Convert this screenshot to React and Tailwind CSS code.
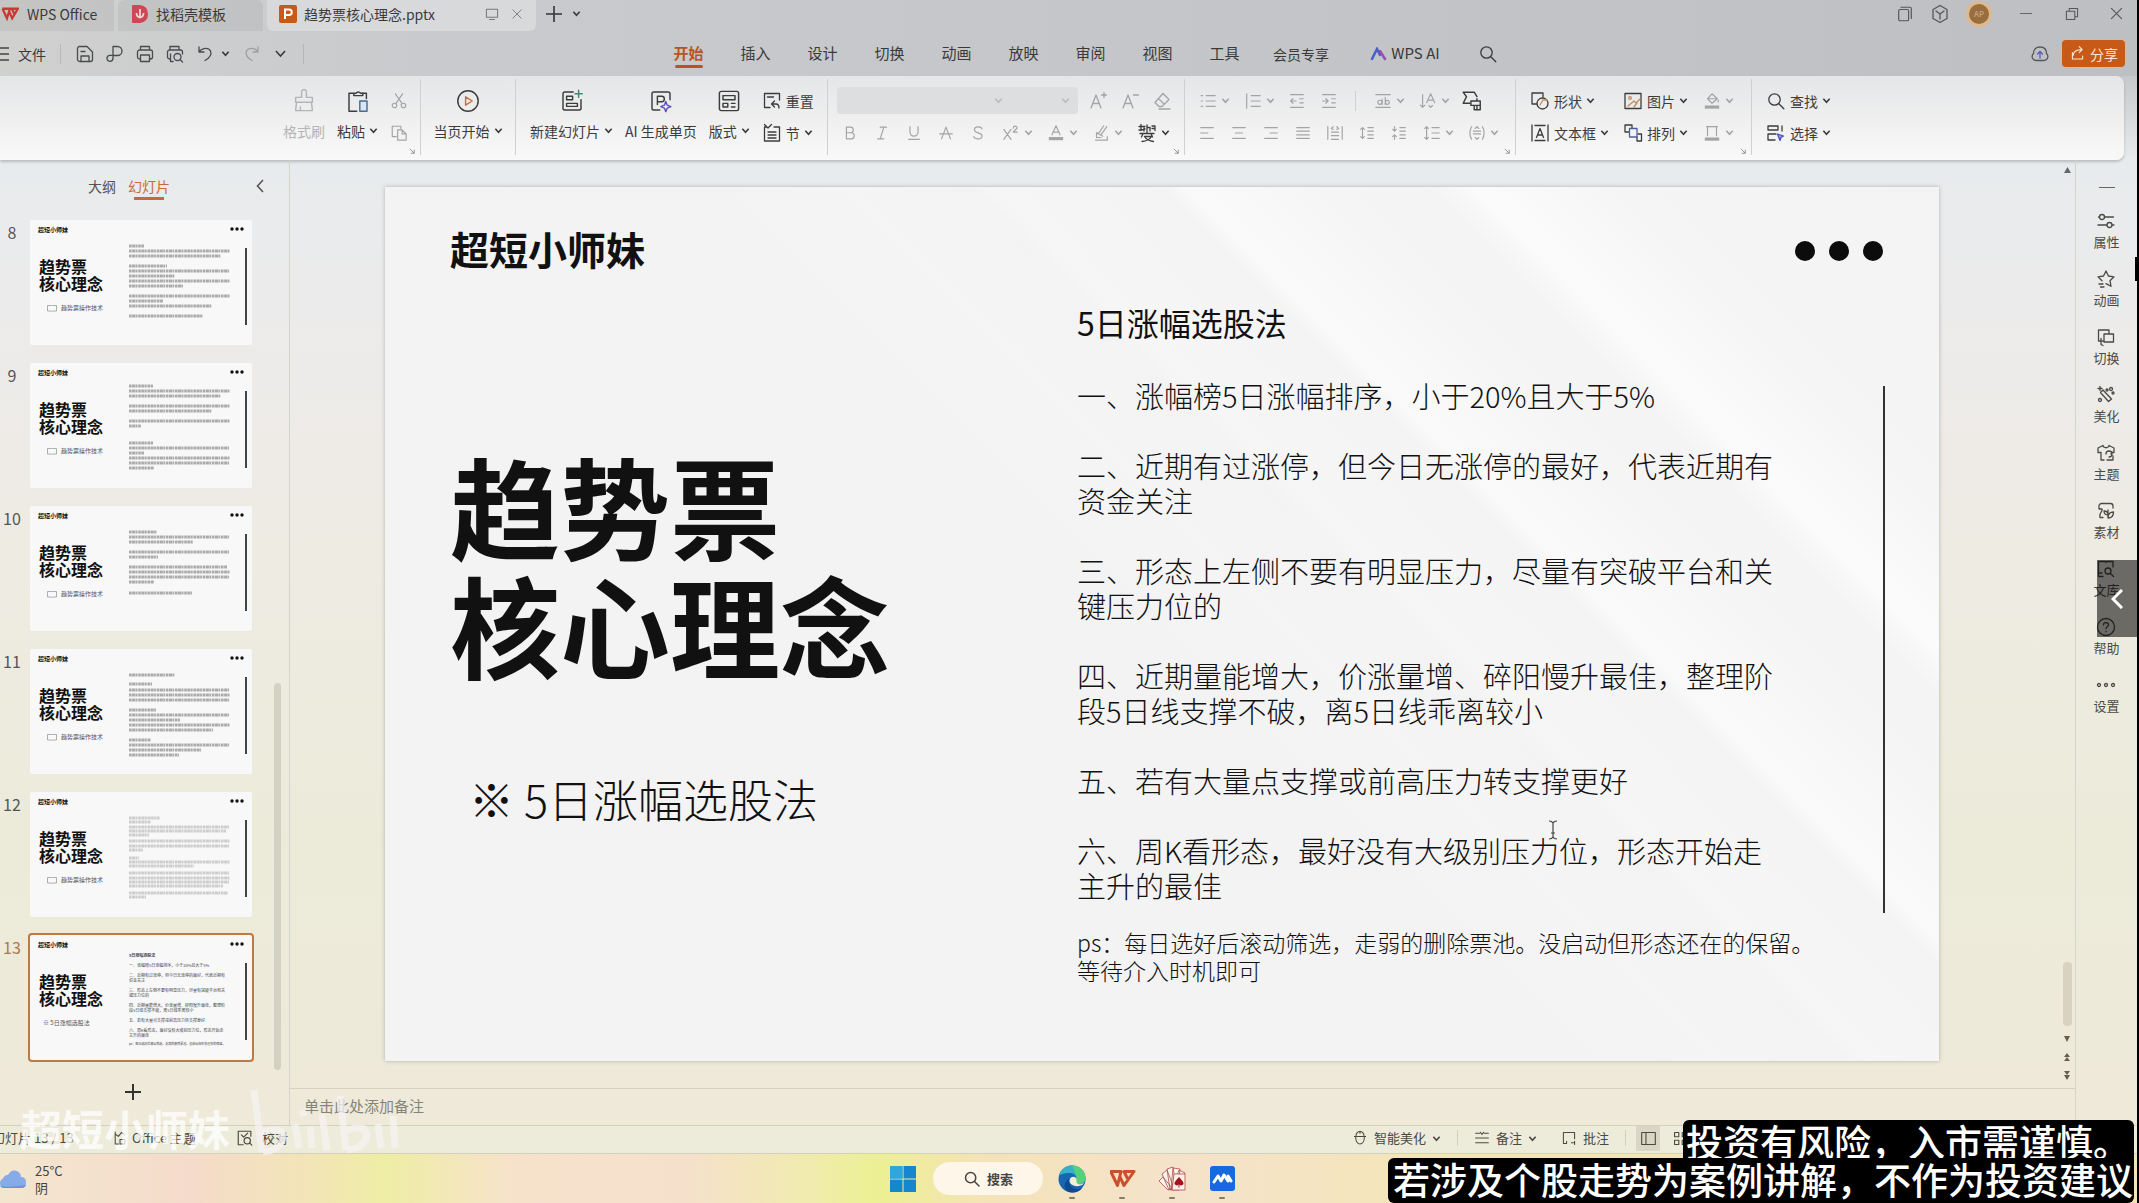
import { useState } from "react";
import clsx from "clsx";

const menus = ['开始', '插入', '设计', '切换', '动画', '放映', '审阅', '视图', '工具'];

const slideLines = [
  '一、涨幅榜5日涨幅排序，小于20%且大于5%',
  '',
  '二、近期有过涨停，但今日无涨停的最好，代表近期有',
  '资金关注',
  '',
  '三、形态上左侧不要有明显压力，尽量有突破平台和关',
  '键压力位的',
  '',
  '四、近期量能增大，价涨量增、碎阳慢升最佳，整理阶',
  '段5日线支撑不破，离5日线乖离较小',
  '',
  '五、若有大量点支撑或前高压力转支撑更好',
  '',
  '六、周K看形态，最好没有大级别压力位，形态开始走',
  '主升的最佳',
];

// [y, width] of every body line in the small previews
const thumbs = [
  { no: 8, rows: [[26, 15], [31, 101], [36, 92], [46, 38], [51, 100], [56, 46], [61, 101], [66, 54], [76, 101], [81, 34], [86, 83], [96, 74]] },
  { no: 9, rows: [[23, 24], [28, 101], [33, 92], [43, 101], [48, 83], [58, 101], [63, 12], [80, 24], [85, 100], [90, 15], [95, 101], [100, 100], [105, 25]] },
  { no: 10, rows: [[26, 28], [31, 100], [36, 64], [46, 100], [51, 29], [61, 98], [66, 101], [71, 100], [76, 25], [87, 63]] },
  { no: 11, rows: [[26, 46], [35, 23], [41, 100], [46, 101], [51, 100], [61, 27], [66, 100], [71, 51], [76, 101], [81, 84], [91, 22], [96, 100], [101, 72], [106, 50]] },
  { no: 12, pale: true, rows: [[26, 31], [30, 22], [35, 100], [39, 97], [43, 20], [49, 101], [54, 100], [58, 14], [66, 10], [70, 101], [74, 65], [81, 100], [86, 101], [90, 100], [94, 94], [101, 99], [105, 17]] },
  { no: 13 },
];

function Icon({ size = 20, className, children, sw = 1.3 }) {
  return (
    <svg width={size} height={size} viewBox="0 0 20 20" fill="none" stroke="currentColor" strokeWidth={sw} strokeLinecap="round" strokeLinejoin="round" className={clsx('shrink-0', className)}>
      {children}
    </svg>
  );
}

const P = ({ d, ...rest }) => <path d={d} {...rest} />;

const icons = {
  save: <><P d="M2.5 4.500a2 2 0 0 1 2-2H12l5.500 5.500v7.500a2 2 0 0 1-2 2h-11a2 2 0 0 1-2-2z" /><P d="M6 17.500V12h8v5.500M6 7.500h4" /></>,
  export: <P d="M8 2.500h4.500a4.500 4.500 0 0 1 0 9H8zM8 11.500v2.800a3 3 0 1 1-3-3h3" />,
  print: <><P d="M5.500 6V2.500h9V6M5.500 15h-1a2 2 0 0 1-2-2V8a2 2 0 0 1 2-2h11a2 2 0 0 1 2 2v5a2 2 0 0 1-2 2h-1" /><P d="M5.500 11h9v6.500h-9z" /></>,
  preview: <><P d="M5 6V2.500h9V6M5 15h-.5a2 2 0 0 1-2-2V8a2 2 0 0 1 2-2h11a2 2 0 0 1 2 2v2M5.500 10v7.500H8" /><circle cx="12.500" cy="13" r="3.500" /><P d="m15 15.500 2.500 2.500" /></>,
  proof: <><P d="M8 17.500H2.500v-15h14V8M6 6.500l2.500 2.500L13 4.500" /><circle cx="12.500" cy="13" r="3.500" /><P d="m15 15.500 2.500 2.500" /></>,
  undo: <P d="M4 3v5h5M4 8c3-4.500 9.500-5 11.500-1 1.500 4-2 7.500-5.500 9.500" />,
  redo: <P d="M16 3v5h-5M16 8c-3-4.500-9.500-5-11.500-1-1.500 4 2 7.500 5.500 9.500" />,
  search: <><circle cx="8.500" cy="8.500" r="5.700" /><P d="m12.800 12.800 5 5" /></>,
  brush: <P d="M8 7V2.500a2 2 0 0 1 4 0V7h5v4H3V7zM3.800 11 3 18h14l-.8-7M7 18v-3" />,
  paste: <><P d="M6 3.500H2.500v15H9M14 3.500h3V8" /><P d="M6.500 5.500v-2h2a2 2 0 0 1 3.500 0h2v2z" /><P d="M11.500 10h6v8.500h-6z" stroke="#4a6a94" fill="#dbe6f3" /></>,
  cut: <><circle cx="5" cy="15" r="2.500" /><circle cx="15" cy="15" r="2.500" /><P d="M6.500 13 14 2M13.500 13 6 2" /></>,
  copy: <P d="M12 5V2.500H2.500V14H7M8.500 6.500h5L18 11v7H8.500zM13.500 6.500V11H18" />,
  play: <><circle cx="10" cy="10" r="8.500" /><P d="M8 6.500 13.500 10 8 13.500z" stroke="#c4713f" /></>,
  newSlide: <><P d="M11 2.500H4a1.500 1.500 0 0 0-1.500 1.500v12A1.500 1.500 0 0 0 4 17.500h12a1.500 1.500 0 0 0 1.500-1.500V9" /><P d="M5.500 6h5v3h-5zM5.500 12h9v2.500h-9z" /><P d="M15.500 1v6M12.500 4h6" stroke="#3c8a6a" /></>,
  aiPage: <><P d="M9 17.500H4A1.500 1.500 0 0 1 2.500 16V4A1.500 1.500 0 0 1 4 2.500h12A1.500 1.500 0 0 1 17.500 4v5M7 13V6h3.500a2.300 2.300 0 0 1 0 4.600H7" /><P d="m14 10.500 1.200 3 3 1.200-3 1.200-1.200 3-1.200-3-3-1.200 3-1.200z" stroke="#5b4fc4" /></>,
  layout: <><rect x="2" y="2" width="16" height="16" rx="1.500" /><P d="M5 5.500h10V9H5zM5 12h4v3H5zM12 12h3M12 15h3" /></>,
  reset: <><P d="M8 16.500H2.500v-14h15V9M5.500 6h6" /><P d="m12.500 10-3 3 3 3M9.500 13H14c2 0 3 1.500 3 4" /></>,
  section: <P d="M5 4H2.500v14h15V4H15M2.500 1.500 6 5l3.500-3.500M12 4h3M6 9h8M6 12h8M6 15h8" />,
  fontUp: <P d="m3 17 5-13 5 13M5 12.500h6M13.500 4h5M16 1.500v5" />,
  fontDown: <P d="m3 17 5-13 5 13M5 12.500h6M13.500 4h5" />,
  eraser: <P d="m11 2.500 6 6-7 7H7L3 11.500zM6.500 7.500l5.500 5.500M7 18h11" />,
  bold: <P d="M6 3.500h4.500a3 3 0 0 1 0 6.200H6zM6 9.700h5.300a3.300 3.300 0 0 1 0 6.800H6z" />,
  italic: <P d="M8 3.500h7M5 16.500h7M12 3.500l-4 13" />,
  underline: <P d="M5.500 3v6a4.500 4.500 0 0 0 9 0V3M4 17h12" />,
  strike: <P d="m5 16.500 5-13 5 13M3 11h14" />,
  shadow: <P d="M14.500 5.500C13.500 2 6 2.500 6 6.300c0 4.500 8.500 2.500 8.500 7 0 4-8 4.500-9.200.7" />,
  sup: <P d="m2 6 8 11M10 6 2 17M12.500 4.500c.3-3 4.500-2.500 4 0-.2 1.500-3 2.500-4 4.500h4.500" />,
  color: <><P d="M5.500 12 10 2l4.500 10M7 9h6" /><rect x="2" y="14.500" width="16" height="3.500" fill="currentColor" stroke="none" /></>,
  marker: <P d="M13 2 7 11M16.500 3 10 12M5 9.500l7 4M5 10v5h5M4 18h13v-4" />,
  pinyin: <><P d="M2 3.500h6M4 1.500v6M2 7l6-1M7 5v3M10 2v5.500M10 4.500h3V8M15 3h3v4.500M15 5.500h3" /><P d="M3 10.500h14M10 8.500v2M6 10.500 4.500 14M14 10.500l1.500 3.500M5 18.500c5-.5 8-2.500 9.500-5H7.500c1.500 2.500 5 4.500 9 5" /></>,
  bullets: <P d="M8 4h10M8 10h10M8 16h10M2.500 4h1.500M2.500 10h1.500M2.500 16h1.500" />,
  numbers: <P d="M8 4h10M8 10h10M8 16h10M3 2v16" />,
  outdent: <P d="M3 3h14M3 17h14M13 7.500h4M13 12h4M9 10H3m2.500-2.500L3 10l2.500 2.500" />,
  indent: <P d="M3 3h14M3 17h14M13 7.500h4M13 12h4M3 10h6M6.500 7.500 9 10l-2.500 2.500" />,
  abBox: <><P d="M2 3h16M2 17h16M9 8v6M17 11.500a2.200 2.200 0 1 1-4.400 0 2.200 2.200 0 0 1 4.400 0M12.500 6v8" /><circle cx="6.500" cy="11.500" r="2.300" /></>,
  textDir: <P d="M4 3v14M1.500 14.500 4 17l2.500-2.500M8.500 12 13 2l4.500 10M10 9h6M11 15l2 2 2-2" />,
  convert: <><P d="M2 2h10l2.500 4M2 2l3 4-3 6h6" /><P d="M9 14v-4h8.500v8H12v-4zM14.500 8v2M12 14h5.500M14.500 14v4" /></>,
  left: <P d="M3 4h14M3 10h8M3 16h14" />,
  center: <P d="M3 4h14M6 10h8M3 16h14" />,
  right: <P d="M3 4h14M9 10h8M3 16h14" />,
  justify: <P d="M3 4h14M3 8h14M3 12h14M3 16h14" />,
  distribute: <P d="M2 3v14M18 3v14M6 9h8M6 13h8M6 17h8M8 3 6 5l2 1M12 3l2 2-2 1" />,
  spaceUp: <P d="M5 4v12M3 6l2-2 2 2M3 14l2 2 2-2M11 4h6M11 8h6M11 12h6M11 16h6" />,
  spaceDown: <P d="M5 3v5M3 6l2 2 2-2M5 17v-5M3 14l2-2 2 2M11 4h6M11 8h6M11 12h6M11 16h6" />,
  lineHeight: <P d="M4 3v14M2 5l2-2 2 2M2 15l2 2 2-2M10 4h8M10 10h8M10 16h8" />,
  vAlign: <P d="M4 3c-2.500 4-2.500 10 0 14M16 3c2.500 4 2.500 10 0 14M6 8h8M6 11h8M8 5l2-2 2 2M8 15l2 2 2-2" />,
  shape: <><P d="M7 13H2V2h11v4" /><circle cx="12.500" cy="12.500" r="5.500" /><P d="m10 14 3-5h4" stroke="#c9925a" /></>,
  picture: <><rect x="2" y="2.500" width="16" height="15" /><P d="m5 15 6-5 2 2 4-4M11 16l3-4" stroke="#c48a5b" /><circle cx="7" cy="7" r="1.300" stroke="#c48a5b" /></>,
  fill: <><P d="m10 2 6 5.500-6 5-5-5zM5 7.500h10M17 9v2" /><rect x="2" y="15" width="16" height="3.500" fill="currentColor" stroke="none" /></>,
  outline: <><P d="M5 13V3h10v10M4 3h3M13 3h3" /><rect x="2" y="15" width="16" height="3.500" fill="currentColor" stroke="none" /></>,
  textBox: <P d="M2 2v16M18 2v16M5 2.500h10M5 17.500h10M6.500 14.500 10 5.500l3.500 9M7.500 12h5" />,
  arrange: <><P d="M6 9H2V2h7v3M14 14v4h4.500v-7H15" /><P d="M6.500 5.500H14V14H6.500z" stroke="#4d5fa8" /></>,
  select: <><P d="M2 3h10v4H2zM9 17H2v-6h8M16 3v5" /><P d="m11.500 11 6 2-2.500 1.500-1 3z" stroke="#4b50c0" fill="#9da0e6" /></>,
  windows: <><rect x="3" y="5" width="11" height="12.500" rx="1.500" /><P d="M5.500 2.500h10a1.500 1.500 0 0 1 1.500 1.500v11" /></>,
  cube: <P d="m10 1.500 7 4v9l-7 4-7-4v-9zM6 7l4 3 4-3M10 10v5" />,
  restore: <P d="M3 6.500h10.500V17H3zM6.500 6.500V3H17v10.500h-3.500" />,
  close: <P d="m4 4 12 12M16 4 4 16" />,
  cloudUp: <><P d="M6 16.500a4 4 0 0 1-2.500-7C3.500 5 6.500 3 10 3s6.500 2 6.500 6.500a4 4 0 0 1-2.500 7z" /><P d="M10 14V8M7.500 10 10 7.500l2.500 2.500" stroke="#5a58b8" /></>,
  share: <P d="M4 9v7.500h12V13M5 12c.5-5 4-6.500 10-6.500M12 2l3.500 3.500L12 9" />,
  props: <><circle cx="6" cy="6" r="2.500" /><P d="M8.500 6h9M2.500 6h1M2 14h9M16 14h2" /><circle cx="13.500" cy="14" r="2.500" /></>,
  star: <P d="m10 2 2.400 5 5.600.8-4 3.900 1 5.600-5-2.700M10 2 7.500 7 2 7.800l4 3.900M3 15h4M4.500 18H8" />,
  swap: <P d="M8 14H2.500V3H13v4M8 7h9.500v8H8zM5 11.500v6l2 1" />,
  beautify: <><P d="m12.500 16.500-8-9 2.500-2.500 8.500 9zM4 1.500v4M2 3.500h4" /><circle cx="15" cy="4" r="1.500" /><circle cx="11" cy="5" r="1" /><circle cx="4" cy="15" r="1.500" /><circle cx="17" cy="8" r="1" /></>,
  theme: <P d="M7 2.500 2 5v4.500h3V17h3M13 2.500 18 5v4.500h-2M7 2.500c.5 3 5.500 3 6 0M11 17h6v-4M10 11a3 3 0 1 1 3 3M15 11l1-2" />,
  material: <P d="M3 8V5a2.500 2.500 0 0 1 2.500-2.500h9A2.500 2.500 0 0 1 17 5v2M3 8h3c1 3-3 3-2 8.500h3M12 17V9M12 14c-3 0-4-2-4-4 3 0 4 2 4 4zM12 17c4 0 5.500-3 5.500-6-4 0-5.500 3-5.500 6z" />,
  library: <><P d="M7 17.500H2.500v-15H9c1 0 1 1 1 1s0-1 1-1h6V8M2.500 14H6" /><circle cx="12" cy="12" r="3" /><P d="m14.500 14.500 3 3" /></>,
  help: <><circle cx="10" cy="10" r="8.500" /><P d="M7.500 8c0-3.500 5-3 5-.3 0 2-2.500 2-2.500 4M10 14.500v.2" /></>,
  more: <><circle cx="3" cy="10" r="1.500" /><circle cx="10" cy="10" r="1.500" /><circle cx="17" cy="10" r="1.500" /></>,
  hat: <P d="M3 8h14M5 8c-1-8 11-8 10 0M4.500 8.500c0 12 11 12 11 0M10 2v2" />,
  notes: <P d="M2 10h16M2 16h16M2 4h5M13 4h5M8 3l2 2.500L12 3" />,
  comment: <P d="M7 17H3V3h14v8M7 17v-3M13 16h4M17 14v4" />,
  normal: <><rect x="2" y="3" width="16" height="14" /><P d="M7 3v14" /></>,
  sorter: <P d="M3 3h5v5H3zM12 3h5v5h-5zM3 12h5v5H3zM12 12h5v5h-5z" />,
  officeTheme: <P d="M4 2.500v15h4M4 5l4 3 4-5 4 3M10 12h6v5.500h-6z" />,
  screen: <P d="M3 4h14v10H3zM7 17h6" />,
};

function Ic({ name, size = 20, className, sw }) {
  return <Icon size={size} className={className} sw={sw}>{icons[name]}</Icon>;
}

function Chevron({ className, size = 9, sw = 1.8 }) {
  return (
    <svg width={size} height={size} viewBox="0 0 10 10" fill="none" stroke="currentColor" strokeWidth={sw} className={clsx('shrink-0', className)}>
      <path d="m1.500 3 3.500 4 3.500-4" />
    </svg>
  );
}

function Cell({ name, drop, pale = true, size = 18 }) {
  return (
    <button aria-label={name} className={clsx('flex h-8 items-center', drop ? 'w-[45px] gap-1 pl-2' : 'w-8 justify-center', pale ? 'text-[#a3a4a6]' : 'text-[#3c3c3c]')}>
      <Ic name={name} size={size} />
      {drop && <Chevron />}
    </button>
  );
}

function BigTool({ name, label, drop, pale, className }) {
  return (
    <button className={clsx('flex flex-col items-center gap-1 whitespace-nowrap', pale ? 'text-[#b4b5b7]' : 'text-[#3c3c3c]', className)}>
      <Ic name={name} size={24} sw={1.2} />
      <span className="flex items-center gap-1 text-sm leading-7">{label}{drop && <Chevron />}</span>
    </button>
  );
}

function SmallTool({ name, label, drop = true }) {
  return (
    <button className="flex h-8 items-center gap-1 text-sm whitespace-nowrap text-[#3c3c3c]">
      <Ic name={name} />
      {label}
      {drop && <Chevron />}
    </button>
  );
}

function Group({ className, corner, children }) {
  return (
    <div className={clsx('relative flex h-[76px] items-center border-r border-[#cfd0d2]', className)}>
      {children}
      {corner && (
        <svg width="7" height="7" viewBox="0 0 8 8" fill="none" stroke="#8a8a8a" className="absolute right-1 bottom-0">
          <path d="M1 1l5 5M6 2v4H2" />
        </svg>
      )}
    </div>
  );
}

function TitleBar() {
  return (
    <div className="flex h-[31px] items-center text-sm text-[#3a3a3a]">
      <button className="flex h-full w-[114px] items-center gap-2 bg-black/5 pb-1 pl-px whitespace-nowrap">
        <svg width="18" height="14" viewBox="0 0 20 16" fill="none" stroke="#c63c33" strokeWidth="2.600">
          <path d="M1 2h9l-3.500 11L1.500 2M9 5l3.500 8L19 2h-7l3 6" />
        </svg>
        WPS Office
      </button>
      <button className="ml-1 flex h-full w-[145px] items-center gap-2 rounded-t-md bg-black/5 pb-1 pl-3.5 whitespace-nowrap">
        <svg width="16" height="18" viewBox="0 0 16 18">
          <path d="M0 1q0-1 1-1h7q8 1 8 9t-8 9H1q-1 0-1-1z" fill="#cf4655" />
          <path d="M8 4v9M4.500 8q0 4 3.500 4.500Q11.500 12 11.500 8" stroke="#f3d3d6" strokeWidth="1.800" fill="none" />
        </svg>
        找稻壳模板
      </button>
      <div className="ml-1 flex h-full w-[269px] items-center rounded-b-md bg-[#d8d9da] pr-3 pb-1 pl-3 whitespace-nowrap">
        <svg width="18" height="18" viewBox="0 0 18 18" className="mr-[7px]">
          <rect width="18" height="18" rx="2" fill="#c75a17" />
          <path d="M6 14V4.500h4a2.800 2.800 0 0 1 0 5.600H6" stroke="#fff" strokeWidth="2" fill="none" />
        </svg>
        趋势票核心理念.pptx
        <Ic name="screen" size={16} className="ml-auto text-[#77787a]" />
        <button aria-label="关闭标签" className="ml-2.5 text-[#77787a]"><Ic name="close" size={14} /></button>
      </div>
      <div className="flex items-center gap-2.5 pb-1 pl-2.5">
        <button aria-label="新建"><svg width="16" height="16" viewBox="0 0 16 16" stroke="#333" strokeWidth="1.600"><path d="M8 0v16M0 8h16" /></svg></button>
        <button aria-label="标签列表"><Chevron /></button>
      </div>
      <div className="ml-auto flex items-center pr-3 pb-1 text-[#55565a]">
        <Ic name="windows" size={18} />
        <Ic name="cube" size={20} className="ml-4" />
        <div className="ml-4 flex size-[26px] items-center justify-center rounded-full bg-[#dfb98c]">
          <span className="flex size-5 items-center justify-center rounded-full bg-[#9a6d3e] text-[8px] text-[#d9b48a]">AP</span>
        </div>
        <button aria-label="最小化" className="ml-7 h-px w-3 bg-[#66676a]" />
        <button aria-label="还原" className="ml-8"><Ic name="restore" size={16} /></button>
        <button aria-label="关闭" className="ml-7"><Ic name="close" size={17} /></button>
      </div>
    </div>
  );
}

function MenuBar({ active, onSelect }) {
  return (
    <div className="flex h-[45px] items-center text-[15px] text-[#3a3a3a]">
      <div className="flex w-[655px] shrink-0 items-center">
        <svg width="10" height="14" viewBox="0 0 10 14" stroke="#444" strokeWidth="1.500"><path d="M0 1h9M0 7h9M0 13h9" /></svg>
        <button className="ml-2 text-sm">文件</button>
        <span className="mx-3.5 h-5 w-px bg-[#b4b6b9]" />
        <div className="flex items-center gap-2.5 text-[#4a4b4d]">
          <Ic name="save" />
          <Ic name="export" />
          <Ic name="print" />
          <Ic name="preview" />
          <Ic name="undo" />
        </div>
        <Chevron className="ml-1.5" />
        <Ic name="redo" className="ml-3 text-[#9d9fa2]" />
        <Chevron size={13} sw={1.2} className="ml-3" />
        <span className="ml-4 h-5 w-px bg-[#b4b6b9]" />
      </div>
      {menus.map((m) => (
        <button key={m} onClick={() => onSelect(m)} className={clsx('relative flex h-9 w-[67px] items-center justify-center', active === m && 'font-bold text-[#b9541f]')}>
          {m}
          {active === m && <span className="absolute bottom-1 h-[3px] w-7 rounded bg-[#b9541f]" />}
        </button>
      ))}
      <button className="w-[86px] text-center text-sm">会员专享</button>
      <button className="flex w-[122px] items-center justify-center gap-1 whitespace-nowrap">
        <svg width="17" height="14" viewBox="0 0 17 14" fill="none" strokeWidth="2.500" strokeLinecap="round">
          <path d="M2 12 7 2l3 6" stroke="#4660c8" />
          <path d="m10 4 5 8" stroke="#9a4bb8" />
        </svg>
        WPS AI
      </button>
      <button aria-label="搜索" className="flex w-11 justify-center"><Ic name="search" /></button>
      <div className="ml-auto flex items-center gap-3 pr-3">
        <Ic name="cloudUp" className="text-[#55565a]" />
        <button className="flex h-[27px] w-[63px] items-center justify-center gap-1 rounded bg-[#c75a17] text-sm text-[#fbe6d8]">
          <Ic name="share" size={17} />分享
        </button>
      </div>
    </div>
  );
}

function Ribbon() {
  return (
    <div className="mr-[13px] flex h-[84px] items-center rounded-r-lg bg-linear-to-b from-[#e4e6e8] via-[#efefef] to-[#f9f9f9] pb-[3px] shadow-[0_2px_3px_rgba(0,0,0,0.2)]">
      <Group corner className="ml-[283px] w-[138px] gap-3">
        <BigTool name="brush" label="格式刷" pale />
        <BigTool name="paste" label="粘贴" drop />
        <div className="flex flex-col text-[#a3a4a6]">
          <button aria-label="剪切" className="flex h-8 items-center"><Ic name="cut" size={18} /></button>
          <button aria-label="复制" className="flex h-8 items-center"><Ic name="copy" size={18} /></button>
        </div>
      </Group>
      <Group className="w-[95px] justify-center">
        <BigTool name="play" label="当页开始" drop />
      </Group>
      <Group className="w-[312px] gap-3 pl-3.5">
        <BigTool name="newSlide" label="新建幻灯片" drop />
        <BigTool name="aiPage" label="AI 生成单页" />
        <BigTool name="layout" label="版式" drop />
        <div className="flex flex-col">
          <SmallTool name="reset" label="重置" drop={false} />
          <SmallTool name="section" label="节" />
        </div>
      </Group>
      <Group corner className="w-[357px] pl-1.5">
        <div>
          <div className="flex h-8 items-center">
            <label className="relative ml-[3px] flex h-[27px] w-[174px] items-center rounded-l bg-[#dddedf]">
              <select disabled aria-label="字体" className="h-full w-full appearance-none bg-transparent" />
              <Chevron className="absolute right-2 text-[#b9babc]" />
            </label>
            <label className="relative flex h-[27px] w-[67px] items-center rounded-r bg-[#dddedf]">
              <select disabled aria-label="字号" className="h-full w-full appearance-none bg-transparent" />
              <Chevron className="absolute right-2 text-[#b9babc]" />
            </label>
            <span className="w-1" />
            <Cell name="fontUp" size={20} />
            <Cell name="fontDown" size={20} />
            <Cell name="eraser" size={20} />
          </div>
          <div className="flex h-8 items-center">
            {['bold', 'italic', 'underline', 'strike', 'shadow'].map((n) => <Cell key={n} name={n} />)}
            <Cell name="sup" drop />
            <Cell name="color" drop />
            <Cell name="marker" drop />
            <Cell name="pinyin" drop pale={false} size={20} />
          </div>
        </div>
      </Group>
      <Group corner className="w-[331px] pl-1.5">
        <div>
          <div className="flex h-8 items-center">
            <Cell name="bullets" drop />
            <Cell name="numbers" drop />
            <Cell name="outdent" />
            <Cell name="indent" />
            <span className="mx-2.5 h-5 w-px bg-[#cfd0d2]" />
            <Cell name="abBox" drop />
            <Cell name="textDir" drop />
            <Cell name="convert" pale={false} size={22} />
          </div>
          <div className="flex h-8 items-center">
            {['left', 'center', 'right', 'justify', 'distribute', 'spaceUp', 'spaceDown'].map((n) => <Cell key={n} name={n} />)}
            <Cell name="lineHeight" drop />
            <Cell name="vAlign" drop />
          </div>
        </div>
      </Group>
      <Group corner className="w-[236px] gap-5 pl-3.5">
        <div className="w-[73px]">
          <SmallTool name="shape" label="形状" />
          <SmallTool name="textBox" label="文本框" />
        </div>
        <div className="w-[60px]">
          <SmallTool name="picture" label="图片" />
          <SmallTool name="arrange" label="排列" />
        </div>
        <div className="-ml-2">
          <Cell name="fill" drop />
          <Cell name="outline" drop />
        </div>
      </Group>
      <div className="pl-3.5">
        <SmallTool name="search" label="查找" />
        <SmallTool name="select" label="选择" />
      </div>
    </div>
  );
}

function Thumb({ item, selected, onClick }) {
  const current = item.no === 13;
  return (
    <div className="flex">
      <span className={clsx('w-7 shrink-0 pt-1 pr-1 text-center text-base leading-5', selected ? 'text-[#b0774a]' : 'text-[#555]')}>{item.no}</span>
      <button
        aria-label={'第' + item.no + '页'}
        onClick={onClick}
        className={clsx('flex h-[129px] w-[226px] flex-col rounded border-2 bg-clip-padding text-left text-[#111] bg-[#f8f8f8]', selected ? 'border-[#c0793f]' : 'border-transparent')}
      >
        <span className="flex h-[18px] w-full items-center justify-between px-2">
          <span className="text-[6px] font-bold">超短小师妹</span>
          <svg width="14" height="4" viewBox="0 0 14 4" fill="#111"><circle cx="2" cy="2" r="1.700" /><circle cx="7" cy="2" r="1.700" /><circle cx="12" cy="2" r="1.700" /></svg>
        </span>
        <span className="flex flex-1 items-start">
          <span className="w-[89px] shrink-0 pt-5 pl-[9px]">
            <span className="block text-base leading-[17px] font-bold">趋势票<br />核心理念</span>
            <span className={clsx('mt-2.5 flex items-center gap-1 text-[6px] leading-3 whitespace-nowrap text-[#555]', current ? 'pl-1' : 'pl-2')}>
              {current ? '※ 5日涨幅选股法' : (
                <>
                  <svg width="10" height="7" viewBox="0 0 10 7" fill="none" stroke="#999" strokeWidth="0.800"><path d="M.5.5h4l.5.5.5-.5h4v5.500h-4L5 6.500 4.500 6h-4z" /></svg>
                  趋势票操作技术
                </>
              )}
            </span>
          </span>
          {current ? (
            <span className="ml-2.5 h-[104px] w-[104px] overflow-hidden text-[4px] leading-[5px] whitespace-nowrap text-[#444]">
              <span className="mb-[5px] block font-bold">5日涨幅选股法</span>
              {slideLines.map((l, i) => <span key={i} className="block min-h-[5px]">{l}</span>)}
              <span className="mt-1 block text-[3px]">ps：每日选好后滚动筛选，走弱的删除票池。没启动但形态还在的保留。</span>
            </span>
          ) : (
            <svg width="104" height="104" viewBox="0 18 104 104" className="ml-2.5" stroke={item.pale ? '#cdcdcd' : '#ababab'} strokeWidth="3">
              {item.rows.map(([y, w]) => <path key={y} d={`M0 ${y}h${w}`} strokeDasharray="2.600 0.500 3.200 0.400 1.800 0.700" />)}
            </svg>
          )}
          <span className="mt-2.5 ml-auto h-[77px] w-0.5 bg-[#444]" />
          <span className="w-[5px]" />
        </span>
      </button>
    </div>
  );
}

function SlidePanel({ current, onSelect }) {
  return (
    <aside className="relative w-[290px] shrink-0 border-r border-[#d5d4cc]">
      <div className="flex h-[58px] items-center pb-1.5 pl-[88px] text-sm text-[#555]">
        <button>大纲</button>
        <button className="relative ml-3 text-[#c8693c]">
          幻灯片
          <span className="absolute inset-x-1.5 -bottom-1 h-[3px] bg-[#c8693c]" />
        </button>
        <button aria-label="收起" className="ml-auto pr-6">
          <svg width="9" height="14" viewBox="0 0 9 14" fill="none" stroke="#555" strokeWidth="1.600"><path d="M7 1 1.500 7 7 13" /></svg>
        </button>
      </div>
      <div className="flex flex-col gap-3.5">
        {thumbs.map((t) => <Thumb key={t.no} item={t} selected={current === t.no} onClick={() => onSelect(t.no)} />)}
      </div>
      <button aria-label="新建幻灯片" className="mt-[22px] ml-[125px] flex size-4 items-center">
        <svg width="16" height="16" viewBox="0 0 16 16" stroke="#333" strokeWidth="2"><path d="M8 0v16M0 8h16" /></svg>
      </button>
      <span className="absolute right-2 bottom-[55px] h-[387px] w-[7px] rounded bg-[#d3d1c2]" />
    </aside>
  );
}

function Slide() {
  return (
    <section className="relative aspect-video w-full overflow-hidden bg-[linear-gradient(45deg,#f3f3f3_50%,#f5f5f5_55%,#f3f3f3_60%,#f6f6f6_61%,#f4f4f4_68%,#fafafa_69%,#f5f5f5_75%,#f4f4f4_79%,#fbfbfb_81%,#f5f5f5_87%,#f3f3f3)] text-[#111] shadow-[0_0_4px_rgba(0,0,0,0.25)]">
      <header className="flex items-center justify-between pt-[41px] pr-[56px] pl-[65px]">
        <h2 className="text-[39px] leading-10 font-bold">超短小师妹</h2>
        <div className="flex gap-3.5 pt-1.5">
          <span className="size-5 rounded-full bg-[#0c0c0c]" />
          <span className="size-5 rounded-full bg-[#0c0c0c]" />
          <span className="size-5 rounded-full bg-[#0c0c0c]" />
        </div>
      </header>
      <div className="flex pr-[54px] pl-[65px] whitespace-nowrap">
        <div className="w-[627px] shrink-0 pt-[177px]">
          <h1 className="text-[110px] leading-[119px] font-bold">趋势票<br />核心理念</h1>
          <p className="mt-[86px] pl-[19px] text-[45px] leading-[60px] font-light">※ 5日涨幅选股法</p>
        </div>
        <div className="pt-[34px]">
          <h3 className="text-[32px] leading-10">5日涨幅选股法</h3>
          <div className="mt-9 text-[29px] leading-[35px] font-light text-[#111]">
            {slideLines.map((line, i) => <p key={i} className="min-h-[35px]">{line}</p>)}
          </div>
          <p className="mt-[25px] text-[23px] leading-7 font-light text-[#111]">
            ps：每日选好后滚动筛选，走弱的删除票池。没启动但形态还在的保留。<br />等待介入时机即可
          </p>
        </div>
        <span className="mt-[118px] ml-auto h-[527px] w-0.5 bg-[#333]" />
      </div>
      <svg width="10" height="20" viewBox="0 0 10 20" fill="none" stroke="#444" strokeWidth="1.200" className="absolute top-[633px] left-[1163px]">
        <path d="M1 1q3 0 4 2 1-2 4-2M5 3v14M1 19q3 0 4-2 1 2 4 2M3 13h4" />
      </svg>
    </section>
  );
}

function ScrollArrows() {
  return (
    <div className="flex w-4 flex-col items-center pt-[7px] pb-1.5">
      <svg width="7" height="6" viewBox="0 0 7 6" fill="#666"><path d="M3.500 0 7 6H0z" /></svg>
      <span className="mt-auto h-16 w-[9px] rounded bg-[#d8d2c0]" />
      <svg width="8" height="46" viewBox="0 0 8 46" fill="#665f50" className="mt-2.5">
        <path d="M1 0h6L4 6zM4 17l3 4H1zM4 21l3 4H1zM1 35h6L4 39zM1 39h6L4 44z" />
      </svg>
    </div>
  );
}

const sideTools = [
  ['props', '属性'], ['star', '动画'], ['swap', '切换'], ['beautify', '美化'], ['theme', '主题'],
  ['material', '素材'], ['library', '文库'], ['help', '帮助'], ['more', '设置'],
];

function SideBar() {
  return (
    <aside className="relative flex w-[62px] shrink-0 flex-col items-center border-l border-[#d5d4cc] text-[#4a4a46]">
      <button aria-label="折叠" className="mt-[27px] h-px w-4 bg-[#666]" />
      <div className="mt-[23px] flex flex-col gap-3.5">
        {sideTools.map(([name, label]) => (
          <button key={name} className="flex h-[44px] flex-col items-center gap-px text-[13px] leading-5">
            <Ic name={name} size={20} />
            <span>{label}</span>
          </button>
        ))}
      </div>
      <button aria-label="展开" className="absolute top-[400px] right-0 flex h-[77px] w-10 items-center justify-center bg-black/55">
        <svg width="12" height="20" viewBox="0 0 12 20" fill="none" stroke="#fff" strokeWidth="3"><path d="M11 1 2 10l9 9" /></svg>
      </button>
      <span className="absolute top-[97px] right-0 h-6 w-0.5 bg-black" />
    </aside>
  );
}

function StatusBar() {
  return (
    <div className="relative flex h-[29px] items-center border-y border-[#d3d0bb] bg-[#edecdb] pb-[3px] text-[13px] whitespace-nowrap text-[#4a4a42]">
      <span className="-ml-2 w-[120px]">幻灯片 13 / 13</span>
      <Ic name="officeTheme" size={16} />
      <span className="ml-1 w-[104px]">Office 主题</span>
      <Ic name="proof" size={18} />
      <span className="ml-2">校对</span>
      <div className="mr-[448px] ml-auto flex items-center">
        <Ic name="hat" size={16} /><button className="ml-1.5">智能美化</button><Chevron className="ml-1.5" />
        <span className="mx-4 h-4 w-px bg-[#d3d0bb]" />
        <Ic name="notes" size={16} /><button className="ml-1.5">备注</button><Chevron className="ml-1.5" />
        <Ic name="comment" size={16} className="ml-6" /><button className="ml-1.5">批注</button>
        <span className="mr-2.5 ml-4 h-4 w-px bg-[#d3d0bb]" />
        <button aria-label="普通视图" className="flex h-[25px] w-6 items-center justify-center bg-[#dad6c6]"><Ic name="normal" size={17} /></button>
        <Ic name="sorter" size={17} className="ml-3" />
      </div>
    </div>
  );
}

function TaskApp({ children }) {
  return (
    <button className="flex h-10 w-[50px] flex-col items-center justify-between pt-1.5">
      <span className="flex h-7 items-center">{children}</span>
      <span className="h-0.5 w-1.5 rounded bg-[#857c66]" />
    </button>
  );
}

function TaskBar() {
  return (
    <div className="relative flex h-[49px] items-center justify-center bg-[linear-gradient(90deg,#f3e6cf,#f5dbcb_9%,#f2e6b4_15%,#eeeda4_18%,#f6e2cb_24%,#f5e0cc_32%,#f0ebad_38%,#ecf092_41%,#f4e3b8_46%,#f5e2cb_55%,#f4e5b9_66%)]">
      <div className="absolute left-0 flex items-center gap-2 text-[#444]">
        <svg width="27" height="20" viewBox="0 0 27 20"><path d="M4 19a5 5 0 0 1-1-9.500A5 5 0 0 1 8 6q3-6 9-4 4 2 4 6 5 0 5 5.500T21 19z" fill="#86abe8" /><path d="M0 17q6 2 26-1-1 3-5 3H4q-3 0-4-2" fill="#6a93de" /></svg>
        <div className="text-[13px] leading-[17px]">25°C<br />阴</div>
      </div>
      <div className="flex items-center">
        <svg width="26" height="26" viewBox="0 0 26 26"><path d="M0 0h12.500v12.500H0zM13.500 0H26v12.500H13.500zM0 13.500h12.500V26H0zM13.500 13.500H26V26H13.500z" fill="#1687cf" /><path d="M0 0h12.500v12.500H0z" fill="#2fa6dc" /></svg>
        <button className="mr-1 ml-[17px] flex h-[33px] w-[110px] items-center justify-center gap-1.5 rounded-full bg-[#fdf6e9] text-[13px] font-bold text-[#444]">
          <Ic name="search" size={18} sw={1.7} />搜索
        </button>
        <TaskApp>
          <svg width="28" height="28" viewBox="0 0 28 28">
            <circle cx="14" cy="14" r="13.500" fill="#1767b0" />
            <path d="M1 11C3 3 9 .5 14 .5 22 .5 27.500 6 27.500 13c0 5-4 7-8 6-3-1-1-3-1-5 0-4-3-6-7-6-5 0-9 1-10.500 3z" fill="#36b0c9" />
            <path d="M14 .5C22 .5 27.500 6 27.500 13c0 4-3 6-6 6-4 0-3-3-3-5 0-4-2-9-4.500-13.500z" fill="#58cf79" />
            <path d="M11 14c-1 7 5 12 13 9-3 4-7 5-10 4.500C6 27 4 18 11 14z" fill="#0e4a8c" />
            <path d="M12 14c-2 4 3 8 9 7 3-.5 4-1.500 5-3-3 2-6 1.500-7 0-1-1 0-2-.5-4-1-3-5.500-3-6.500 0z" fill="#f4efd4" />
          </svg>
        </TaskApp>
        <TaskApp>
          <svg width="28" height="20" viewBox="0 0 28 20" fill="none" stroke="#c9502c" strokeWidth="3" strokeLinejoin="round">
            <path d="M2 2.500h11L9.500 16.500 3 3M12 8l4 8.500L26 2.500H16l3.500 7" />
          </svg>
        </TaskApp>
        <TaskApp>
          <svg width="28" height="26" viewBox="0 0 28 26" stroke="#b04b4b" strokeWidth="0.800" fill="#fbf2ea">
            <path d="m10 24-9-9 4-4 9 11zM11 24 4 8l5-4 7 18zM12 24 9 3l6-2 3 20zM13 24 15 2l7 1-2 19zM14 24l7-20 6 3-6 17z" />
            <path d="M16 8h11v16H14z" /><path d="M21 11q5 5 4.500 7-2 2.500-4 .5v3h-1v-3q-2 2-4-.5Q16 16 21 11z" fill="#a4131d" stroke="none" />
          </svg>
        </TaskApp>
        <TaskApp>
          <svg width="25" height="25" viewBox="0 0 25 25"><rect width="25" height="25" rx="3" fill="#1769e0" /><path d="m4 16 4-6 3 5 3-6 4 6" stroke="#fff" strokeWidth="3" fill="none" strokeLinecap="round" strokeLinejoin="round" /><path d="M18 10l3 5" stroke="#fff" strokeWidth="3" strokeLinecap="round" /></svg>
        </TaskApp>
      </div>
    </div>
  );
}

function Overlays() {
  return (
    <>
      <div className="pointer-events-none absolute bottom-[37px] left-5 flex items-center text-[42px] leading-[58px] font-bold whitespace-nowrap text-white/75">
        超短小师妹
        <svg width="156" height="68" viewBox="0 0 156 68" fill="none" stroke="#f6f2f2" strokeWidth="7" strokeOpacity="0.750" className="mb-2 ml-5">
          <path d="M4 0 12 62M13 42q20-6 20 5-2 13-20 15M45 34l4 24M60 36l2 22M52 20l2 6M72 24l5 36M90 6l6 54M97 40q20-6 20 5-2 13-20 15M128 34l3 24M143 26l2 32" />
        </svg>
      </div>
      <div className="pointer-events-none absolute right-[3px] bottom-0 flex flex-col items-end text-[37px] font-medium whitespace-nowrap text-white">
        <p className="h-[38px] rounded-t-md bg-black pr-1 pl-[3px] leading-[42px]">投资有风险，入市需谨慎。</p>
        <p className="h-[45px] rounded-md rounded-tr-none bg-black pr-px pl-[5px] leading-[42px]">若涉及个股走势为案例讲解，不作为投资建议</p>
      </div>
    </>
  );
}

export default function App() {
  const [menu, setMenu] = useState('开始');
  const [current, setCurrent] = useState(13);

  return (
    <div className="relative flex min-h-screen flex-col overflow-hidden border-r-2 border-black bg-[linear-gradient(180deg,#e8ebed_14%,#edebea_30%,#eeebe3_45%,#ecebda_70%,#efe9d9)] font-['Noto_Sans_CJK_SC',sans-serif]">
      <div className="bg-[linear-gradient(90deg,#d0d0cf,#c8cacd_22%,#c3c5c8_60%,#bebfc2)]">
        <TitleBar />
        <MenuBar active={menu} onSelect={setMenu} />
      </div>
      <div className="bg-linear-to-b from-[#c6c8ca] to-[#e8ebed]">
        <Ribbon />
      </div>
      <div className="flex flex-1">
        <SlidePanel current={current} onSelect={setCurrent} />
        <main className="flex min-w-0 flex-1 flex-col">
          <div className="flex flex-1">
            <div className="min-w-0 flex-1 pt-[27px] pr-[120px] pb-[27px] pl-[95px]">
              <Slide />
            </div>
            <ScrollArrows />
          </div>
          <input aria-label="备注" placeholder="单击此处添加备注" className="h-[37px] w-full border-t border-[#d5d2c0] bg-transparent pb-[3px] pl-3.5 text-[15px] outline-none placeholder:text-[#85847a]" />
        </main>
        <SideBar />
      </div>
      <StatusBar />
      <TaskBar />
      <Overlays />
    </div>
  );
}
